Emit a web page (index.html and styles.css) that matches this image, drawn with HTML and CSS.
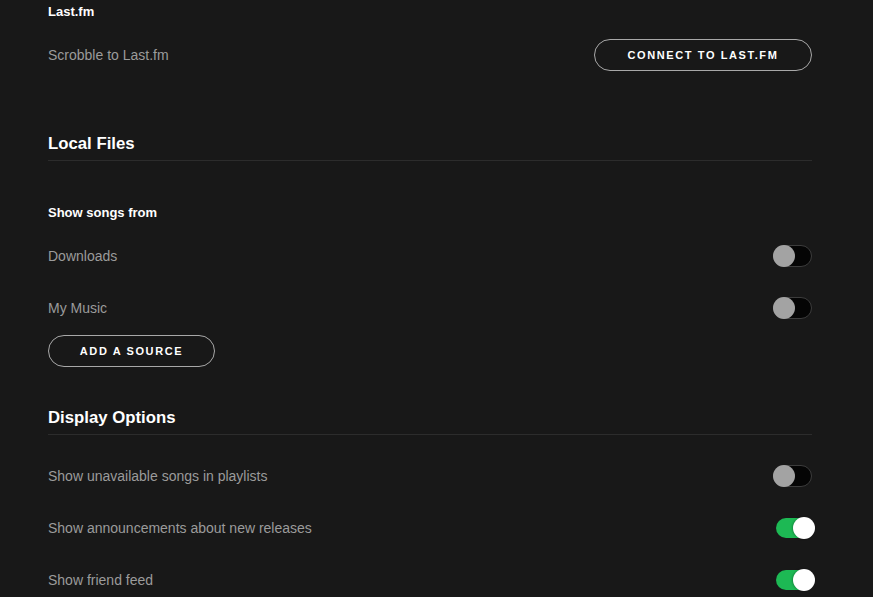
FILE: index.html
```html
<!DOCTYPE html>
<html>
<head>
<meta charset="utf-8">
<link rel="stylesheet" href="styles.css">
</head>
<body>
<div class="settings">
  <div class="subhead top">Last.fm</div>
  <div class="row">
    <span class="label">Scrobble to Last.fm</span>
    <button class="pill">CONNECT TO LAST.FM</button>
  </div>

  <h2 class="section first">Local Files</h2>
  <div class="subhead songs">Show songs from</div>
  <div class="row">
    <span class="label">Downloads</span>
    <span class="toggle off"><span class="knob"></span></span>
  </div>
  <div class="row">
    <span class="label">My Music</span>
    <span class="toggle off"><span class="knob"></span></span>
  </div>
  <button class="pill add">ADD A SOURCE</button>

  <h2 class="section second">Display Options</h2>
  <div class="rows-after">
    <div class="row">
      <span class="label">Show unavailable songs in playlists</span>
      <span class="toggle off"><span class="knob"></span></span>
    </div>
    <div class="row">
      <span class="label">Show announcements about new releases</span>
      <span class="toggle on"><span class="knob"></span></span>
    </div>
    <div class="row">
      <span class="label">Show friend feed</span>
      <span class="toggle on"><span class="knob"></span></span>
    </div>
  </div>
</div>
</body>
</html>
```

FILE: styles.css
```css
html, body {
  margin: 0;
  padding: 0;
  background: #181818;
  height: 100%;
  overflow: hidden;
}
body {
  font-family: "Liberation Sans", Arial, sans-serif;
  color: #fff;
}
.settings {
  padding: 4px 61px 0 48px;
  display: flex;
  flex-direction: column;
}
.subhead {
  font-size: 13px;
  font-weight: bold;
  line-height: 16px;
  color: #fff;
}
.subhead.songs {
  margin-top: 42px;
  line-height: 20px;
}
.row {
  height: 52px;
  display: flex;
  align-items: center;
  justify-content: space-between;
}
.subhead.top + .row {
  margin-top: 9px;
}
.subhead.songs + .row {
  margin-top: 7px;
}
.label {
  font-size: 14px;
  color: #9b9b9b;
}
.pill {
  height: 32px;
  border: 1px solid #a8a8a8;
  border-radius: 16px;
  background: transparent;
  color: #fff;
  font-family: "Liberation Sans", Arial, sans-serif;
  font-size: 11px;
  font-weight: bold;
  letter-spacing: 1.6px;
  padding: 0;
  white-space: nowrap;
  box-sizing: border-box;
  width: 218px;
}
.pill.add {
  align-self: flex-start;
  width: 167px;
  margin-top: 1px;
}
.section {
  margin: 0;
  font-size: 16.75px;
  font-weight: bold;
  line-height: 24px;
  padding-bottom: 4px;
  border-bottom: 1px solid #2c2c2c;
}
.section.first { margin-top: 51px; }
.section.second { margin-top: 39px; }
.rows-after { margin-top: 15px; }
.toggle {
  position: relative;
  width: 39px;
  height: 22px;
  flex: none;
}
.toggle.off {
  background: #050505;
  border: 1px solid #3c3c3c;
  border-radius: 11px;
  box-sizing: border-box;
}
.toggle.off .knob {
  position: absolute;
  left: -1px;
  top: -1px;
  width: 22px;
  height: 22px;
  border-radius: 50%;
  background: #a3a3a3;
}
.toggle.on {
  margin-right: -3px;
}
.toggle.on::before {
  content: "";
  position: absolute;
  left: 0;
  top: 1px;
  width: 34px;
  height: 20px;
  border-radius: 10px;
  background: #1db954;
}
.toggle.on .knob {
  position: absolute;
  right: 0;
  top: 0;
  width: 22px;
  height: 22px;
  border-radius: 50%;
  background: #fff;
  box-shadow: -1px 0 2px rgba(0,0,0,0.25);
}
```
